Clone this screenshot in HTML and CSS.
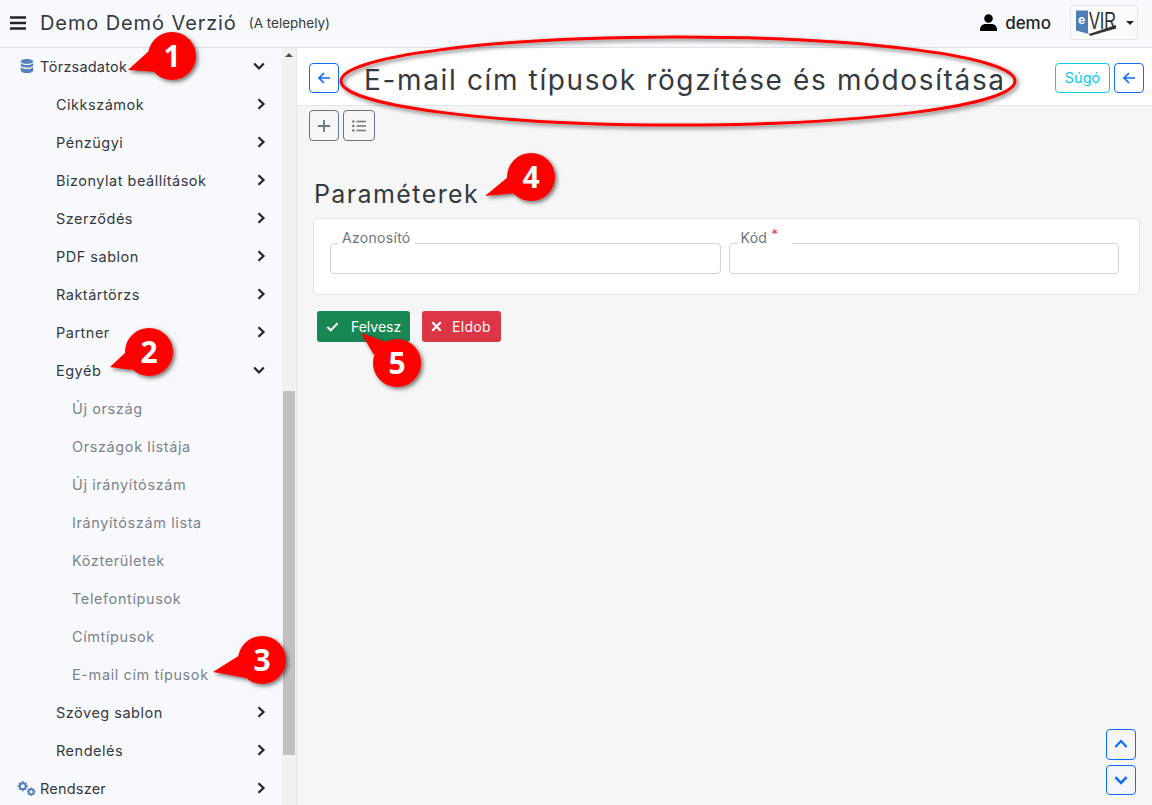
FILE: index.html
```html
<!DOCTYPE html>
<html lang="hu">
<head>
<meta charset="utf-8">
<title>E-mail cím típusok</title>
<link rel="stylesheet" href="styles.css">
</head>
<body>
<svg class="defs" width="0" height="0">
  <symbol id="right" viewBox="0 0 12 12"><path d="M3.500 1.200 8.500 6l-5 4.800" fill="none" stroke="currentColor" stroke-width="2.200"/></symbol>
  <symbol id="down" viewBox="0 0 12 12"><path d="M1.200 3.500 6 8.500l4.800-5" fill="none" stroke="currentColor" stroke-width="2.200"/></symbol>
  <symbol id="up" viewBox="0 0 12 12"><path d="M1.200 8.500 6 3.500l4.800 5" fill="none" stroke="currentColor" stroke-width="1.900"/></symbol>
  <symbol id="back" viewBox="0 0 14 14"><path d="M13 7H2.500M7 2 2 7l5 5" fill="none" stroke="currentColor" stroke-width="1.700"/></symbol>
</svg>
<header class="topbar">
  <svg class="bars" viewBox="0 0 16 14"><path d="M0 1.500h16M0 7h16M0 12.500h16" stroke="currentColor" stroke-width="2.400"/></svg>
  <span class="brand">Demo Demó Verzió</span>
  <span class="site">(A telephely)</span>
  <span class="user">
    <svg class="user-icon" viewBox="0 0 16 16"><circle cx="8" cy="4.200" r="4"/><path d="M0 16v-1.500C0 11.500 2.500 9.500 5 9.500h6c2.500 0 5 2 5 5V16z"/></svg>
    demo
  </span>
  <span class="logo-box">
    <svg class="logo" viewBox="0 0 46 26">
      <path d="M1 .5h12v22l1 1.500-13-3.500z" fill="#4f7db8"/>
      <text x="3" y="14" class="logo-e">e</text>
      <path d="M14 24 41 15v3.500L15 26z" fill="#333"/>
      <text x="14" y="19" class="logo-vir" textLength="27" lengthAdjust="spacingAndGlyphs">VIR</text>
    </svg>
    <span class="caret"></span>
  </span>
</header>
<div class="layout">
  <aside class="sidebar">
    <nav class="menu">
      <a class="row lvl0"><svg class="ico" viewBox="0 0 14 14"><path d="M7 0C3.500 0 .8 1 .8 2.400S3.500 4.800 7 4.800s6.200-1 6.200-2.400S10.500 0 7 0zM.8 4v2.300c0 1.400 2.700 2.400 6.200 2.400s6.200-1 6.200-2.400V4C12 5.500 9.500 6 7 6S2 5.500.8 4zm0 3.900v3.500C.8 12.900 3.500 14 7 14s6.200-1.100 6.200-2.600V7.900C12 9.400 9.500 10 7 10S2 9.400.8 7.900z"/></svg><span class="label">Törzsadatok</span><svg class="chev chev-down"><use href="#down"/></svg></a>
      <a class="row lvl1"><span class="label">Cikkszámok</span><svg class="chev"><use href="#right"/></svg></a>
      <a class="row lvl1"><span class="label">Pénzügyi</span><svg class="chev"><use href="#right"/></svg></a>
      <a class="row lvl1"><span class="label">Bizonylat beállítások</span><svg class="chev"><use href="#right"/></svg></a>
      <a class="row lvl1"><span class="label">Szerződés</span><svg class="chev"><use href="#right"/></svg></a>
      <a class="row lvl1"><span class="label">PDF sablon</span><svg class="chev"><use href="#right"/></svg></a>
      <a class="row lvl1"><span class="label">Raktártörzs</span><svg class="chev"><use href="#right"/></svg></a>
      <a class="row lvl1"><span class="label">Partner</span><svg class="chev"><use href="#right"/></svg></a>
      <a class="row lvl1"><span class="label">Egyéb</span><svg class="chev chev-down"><use href="#down"/></svg></a>
      <a class="row lvl2">Új ország</a>
      <a class="row lvl2">Országok listája</a>
      <a class="row lvl2">Új irányítószám</a>
      <a class="row lvl2">Irányítószám lista</a>
      <a class="row lvl2">Közterületek</a>
      <a class="row lvl2">Telefontípusok</a>
      <a class="row lvl2">Címtípusok</a>
      <a class="row lvl2">E-mail cím típusok</a>
      <a class="row lvl1"><span class="label">Szöveg sablon</span><svg class="chev"><use href="#right"/></svg></a>
      <a class="row lvl1"><span class="label">Rendelés</span><svg class="chev"><use href="#right"/></svg></a>
      <a class="row lvl0"><svg class="ico ico-cog" viewBox="0 0 20 16"><g><circle cx="6" cy="5.500" r="3.200" fill="none" stroke="currentColor" stroke-width="2.200"/><path d="M6 0v2M6 9v2M.5 5.500h2M9.500 5.500h2M2.200 1.700l1.400 1.400M8.400 7.900l1.400 1.400M2.200 9.300l1.400-1.400M8.400 3.100l1.400-1.400" stroke="currentColor" stroke-width="1.800"/><circle cx="15" cy="11.500" r="2.700" fill="none" stroke="currentColor" stroke-width="2"/><path d="M15 7v1.800M15 14.200V16M10.500 11.500h1.800M17.700 11.500h1.800M11.800 8.300l1.300 1.300M16.900 13.400l1.300 1.300M11.800 14.700l1.300-1.300M16.900 9.600l1.300-1.300" stroke="currentColor" stroke-width="1.600"/></g></svg><span class="label">Rendszer</span><svg class="chev"><use href="#right"/></svg></a>
    </nav>
    <div class="scrollbar">
      <span class="scroll-up"></span>
      <span class="scroll-thumb"></span>
    </div>
  </aside>
  <main class="content">
    <div class="titlebar">
      <button class="btn btn-blue btn-square"><svg class="btn-ico"><use href="#back"/></svg></button>
      <h1 class="title">E-mail cím típusok rögzítése és módosítása</h1>
      <button class="btn btn-cyan">Súgó</button>
      <button class="btn btn-blue btn-square"><svg class="btn-ico"><use href="#back"/></svg></button>
    </div>
    <div class="toolbar">
      <button class="btn btn-gray btn-square"><svg class="btn-ico" viewBox="0 0 14 14"><path d="M7 1v12M1 7h12" stroke="currentColor" stroke-width="1.800"/></svg></button>
      <button class="btn btn-gray btn-list"><svg class="btn-ico" viewBox="0 0 14 14"><path d="M4.500 2.500H14M4.500 7H14M4.500 11.500H14" stroke="currentColor" stroke-width="1.500"/><circle cx="1.300" cy="2.500" r="1.200" fill="currentColor"/><circle cx="1.300" cy="7" r="1.200" fill="currentColor"/><circle cx="1.300" cy="11.500" r="1.200" fill="currentColor"/></svg></button>
    </div>
    <h2 class="section">Paraméterek</h2>
    <section class="card">
      <div class="field">
        <label class="float">Azonosító</label>
        <input class="input" type="text">
      </div>
      <div class="field">
        <label class="float">Kód <span class="req">*</span></label>
        <input class="input" type="text">
      </div>
    </section>
    <div class="actions">
      <button class="action act-green"><svg class="act-ico" viewBox="0 0 14 14"><path d="M1.500 7.500 5.200 11 12.500 3.500" fill="none" stroke="currentColor" stroke-width="2.200"/></svg>Felvesz</button>
      <button class="action act-red"><svg class="act-ico" viewBox="0 0 14 14"><path d="M2.500 2.500l9 9M11.500 2.500l-9 9" stroke="currentColor" stroke-width="2.400"/></svg>Eldob</button>
    </div>
    <div class="pager">
      <button class="btn btn-blue btn-square"><svg class="btn-ico"><use href="#up"/></svg></button>
      <button class="btn btn-blue btn-square"><svg class="btn-ico"><use href="#down"/></svg></button>
    </div>
  </main>
</div>
<svg class="notes" viewBox="0 0 1152 805">
  <defs>
    <filter id="sh" x="-30%" y="-30%" width="170%" height="170%"><feDropShadow dx="2" dy="2" stdDeviation="2" flood-color="#000" flood-opacity=".55"/></filter>
  </defs>
  <ellipse cx="678" cy="81" rx="337" ry="44" class="ring" filter="url(#sh)"/>
  <g filter="url(#sh)"><path d="M128 70 150 50 157 72Z" class="bub"/><circle cx="172" cy="56" r="24" class="bub"/></g>
  <text x="172" y="67" class="num">1</text>
  <g filter="url(#sh)"><path d="M110 367 125 353 132 370Z" class="bub"/><circle cx="149" cy="352" r="24" class="bub"/></g>
  <text x="149" y="363" class="num">2</text>
  <g filter="url(#sh)"><path d="M213 672 240 655 246 678Z" class="bub"/><circle cx="262" cy="660" r="24" class="bub"/></g>
  <text x="262" y="671" class="num">3</text>
  <g filter="url(#sh)"><path d="M485 196 508 177 517 193Z" class="bub"/><circle cx="531" cy="177" r="24" class="bub"/></g>
  <text x="531" y="188" class="num">4</text>
  <g filter="url(#sh)"><path d="M361 333 386 342 374 355Z" class="bub"/><circle cx="397" cy="363" r="24" class="bub"/></g>
  <text x="397" y="374" class="num">5</text>
</svg>
</body>
</html>
```
FILE: styles.css
```css
* { box-sizing: border-box; }
html, body { height: 100%; }
body {
  margin: 0;
  height: 805px;
  overflow: hidden;
  display: flex;
  flex-direction: column;
  position: relative;
  font-family: Inter, "Open Sans", "Liberation Sans", sans-serif;
  font-size: 14.500px;
  color: #212529;
  background: #f6f6f6;
}
.defs { position: absolute; }
.topbar {
  height: 48px;
  flex: none;
  display: flex;
  align-items: center;
  padding: 0 14px 2px 10px;
  background: #f8f9fc;
  border-bottom: 1px solid #dfe1e6;
}
.bars { width: 16px; height: 14px; color: #212529; margin-right: 14px; }
.brand { font-size: 20px; letter-spacing: .9px; color: #343a40; white-space: nowrap; }
.site { font-size: 13.500px; margin-left: 12px; color: #343a40; white-space: nowrap; }
.user { margin-left: auto; display: flex; align-items: center; gap: 8px; font-size: 17px; font-weight: 500; }
.user-icon { width: 17px; height: 17px; }
.logo-box {
  margin-left: 19px;
  width: 68px;
  height: 35px;
  display: flex;
  align-items: center;
  padding-left: 4px;
  background: #fbfbfc;
  border: 1px solid #e3e5e8;
  border-radius: 4px;
}
.logo { width: 46px; height: 26px; flex: none; overflow: visible; }
.logo-e { font: 700 13px "Liberation Sans", sans-serif; fill: #fff; }
.logo-vir { font: 400 24px "Liberation Sans", sans-serif; fill: #2a2a2a; }
.caret { margin-left: 5px; border: 4px solid transparent; border-top-color: #212529; border-bottom: 0; }
.layout { flex: 1; display: flex; min-height: 0; }
.sidebar {
  width: 297px;
  flex: none;
  display: flex;
  background: #f8f9fc;
  border-right: 1px solid #e3e5e8;
}
.menu { width: 282px; flex: none; display: flex; flex-direction: column; margin-top: -1px; }
.row {
  height: 38px;
  flex: none;
  display: flex;
  align-items: center;
  padding-right: 15px;
  color: #343a40;
  white-space: nowrap;
}
.lvl0 { padding-left: 16px; }
.lvl1 { padding-left: 56px; }
.lvl1 .label { letter-spacing: .5px; }
.lvl2 { padding-left: 72px; color: #7d848b; letter-spacing: .6px; }
.label { flex: 1; letter-spacing: .2px; }
.ico { width: 14px; height: 14px; margin: 0 6px 0 4px; fill: #5682bd; color: #5682bd; }
.ico-cog { width: 19px; height: 15px; margin: 0 4px 0 1px; }
.chev { width: 12px; height: 12px; color: #212529; }
.chev-down { margin-right: 2px; margin-left: -2px; }
.scrollbar { width: 14px; flex: none; background: #f1f1f1; display: flex; flex-direction: column; align-items: center; }
.scroll-up { margin-top: 5px; border: 4px solid transparent; border-bottom: 4px solid #505050; border-top: 0; }
.scroll-thumb { width: 12px; height: 364px; margin-top: 334px; background: #c1c1c1; }
.content { flex: 1; min-width: 0; display: flex; flex-direction: column; }
.titlebar {
  height: 58px;
  flex: none;
  display: flex;
  align-items: center;
  padding: 2px 8px 0 12px;
  background: #fff;
  border-bottom: 1px solid #e3e5e8;
}
.title {
  flex: 1;
  margin: 4px 0 0 25px;
  font-size: 28px;
  font-weight: 400;
  letter-spacing: 1.640px;
  color: #343a40;
  white-space: nowrap;
}
.btn {
  height: 30px;
  padding: 0;
  display: flex;
  align-items: center;
  justify-content: center;
  background: transparent;
  border: 1px solid;
  border-radius: 4px;
  font: inherit;
}
.btn-square { width: 30px; }
.btn-list { width: 32px; }
.btn-blue { color: #0d6efd; }
.btn-cyan { width: 55px; margin-right: 4px; color: #0dcaf0; }
.btn-gray { color: #6c757d; height: 31px; }
.btn-ico { width: 14px; height: 14px; }
.toolbar { display: flex; gap: 4px; padding: 4px 0 0 12px; flex: none; }
.section {
  margin: 38px 0 0 17px;
  font-size: 25px;
  font-weight: 400;
  letter-spacing: 1.400px;
  line-height: 30px;
  color: #343a40;
  flex: none;
}
.card {
  margin: 9px 12px 0 16px;
  height: 77px;
  flex: none;
  display: flex;
  gap: 8px;
  padding: 24px 20px 0 16px;
  background: #fff;
  border: 1px solid #e3e5e8;
  border-radius: 4px;
}
.field { flex: 1; position: relative; }
.input {
  display: block;
  width: 100%;
  height: 31px;
  background: #fff;
  border: 1px solid #ced4da;
  border-radius: 4px;
}
.float {
  position: absolute;
  left: 8px;
  top: -15px;
  padding: 0 4px;
  background: #fff;
  color: #6c757d;
  font-size: 14px;
  letter-spacing: .3px;
  line-height: 20px;
}
.float:has(.req) { padding-right: 14px; }
.req { color: #dc3545; position: relative; top: -4px; font-size: 13px; }
.actions { display: flex; gap: 12px; padding: 16px 0 0 20px; flex: none; }
.action {
  height: 31px;
  display: flex;
  align-items: center;
  padding: 0 9px;
  border: 0;
  border-radius: 3px;
  color: #fff;
  font: inherit;
  font-size: 14px;
}
.act-green { width: 93px; background: #198754; }
.act-red { width: 79px; background: #dc3545; letter-spacing: .3px; }
.act-ico { width: 13px; height: 13px; margin-right: 12px; flex: none; }
.act-red .act-ico { margin-right: 9px; margin-left: -1px; }
.pager {
  margin-top: auto;
  padding: 0 16px 10px 0;
  display: flex;
  flex-direction: column;
  align-items: flex-end;
  gap: 5px;
}
.pager .btn { height: 30.500px; }
.notes { position: absolute; left: 0; top: 0; width: 1152px; height: 805px; pointer-events: none; }
.ring { fill: none; stroke: #f00; stroke-width: 3px; }
.bub { fill: #f00; }
.num { font: 700 30px "Open Sans", "Liberation Sans", sans-serif; fill: #fff; text-anchor: middle; }
```
